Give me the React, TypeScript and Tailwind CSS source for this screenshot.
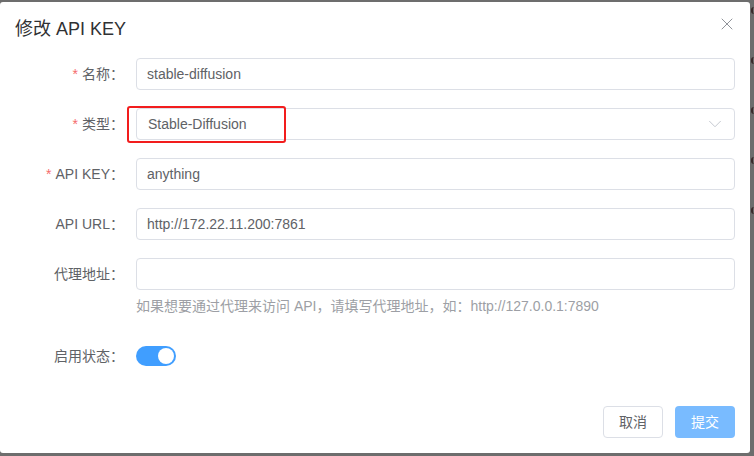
import { X, ChevronDown } from 'lucide-react';

const FONT = '"Liberation Sans", "Noto Sans CJK SC", sans-serif';

function Label({ text, required }: { text: string; required?: boolean }) {
  return (
    <div className="w-[136px] shrink-0 pr-[12px] text-right text-[14px] leading-[32px] text-[#606266]">
      {required && <span className="mr-[4px] text-[#f56c6c]">*</span>}
      {text}
    </div>
  );
}

function Field({ value }: { value: string }) {
  return (
    <div className="mr-[15px] flex h-[32px] flex-1 items-center rounded-[4px] border border-[#dcdfe6] px-[10px] text-[14px] text-[#606266]">
      {value}
    </div>
  );
}

export default function App() {
  return (
    <div className="relative h-[456px] w-[754px] overflow-hidden bg-[#6d6d6d]" style={{ fontFamily: FONT }}>
      {/* page content peeking out from behind the mask */}
      {[7, 57, 107, 157, 207].map((y) => (
        <span key={y} className="absolute left-[751px] h-[7px] w-[3px] rounded-l-full border-l-2 border-[#3a2a2a]" style={{ top: y }} />
      ))}

      <div className="mt-[2px] h-[451px] w-[750px] rounded-[3px] bg-white">
        <div className="relative px-[15px] pt-[15px]">
          <h1 className="text-[18px] leading-[24px] text-[#303133]">修改 API KEY</h1>
          <button className="absolute right-[13px] top-[12px] text-[#909399]">
            <X size={20} strokeWidth={1.2} />
          </button>
        </div>

        <div className="mt-[17px] flex flex-col">
          <div className="mb-[18px] flex">
            <Label text="名称：" required />
            <Field value="stable-diffusion" />
          </div>

          <div className="mb-[18px] flex">
            <Label text="类型：" required />
            <div className="relative mr-[15px] flex h-[32px] flex-1 items-center justify-between rounded-[4px] border border-[#dcdfe6] pl-[11px] pr-[8px] text-[14px] text-[#606266]">
              <span>Stable-Diffusion</span>
              <ChevronDown size={22} strokeWidth={1} className="text-[#c0c4cc]" />
              <div className="absolute left-[-10px] top-[-3px] h-[37px] w-[159px] rounded-[3px] border-2 border-[#f21d1d]" />
            </div>
          </div>

          <div className="mb-[18px] flex">
            <Label text="API KEY：" required />
            <Field value="anything" />
          </div>

          <div className="mb-[18px] flex">
            <Label text="API URL：" />
            <Field value="http://172.22.11.200:7861" />
          </div>

          <div className="flex">
            <Label text="代理地址：" />
            <Field value="" />
          </div>
          <p className="ml-[136px] mt-[6px] text-[14px] leading-[20px] text-[#9d9fa5]">
            如果想要通过代理来访问 API，请填写代理地址，如：http://127.0.0.1:7890
          </p>

          <div className="mt-[24px] flex items-center">
            <Label text="启用状态：" />
            <div className="flex h-[20px] w-[40px] items-center justify-end rounded-full bg-[#409eff] px-[2px]">
              <div className="h-[16px] w-[16px] rounded-full bg-white" />
            </div>
          </div>
        </div>

        <div className="mr-[15px] mt-[34px] flex justify-end gap-[12px]">
          <button className="h-[32px] w-[60px] rounded-[4px] border border-[#dcdfe6] bg-white text-[14px] text-[#606266]">
            取消
          </button>
          <button className="h-[32px] w-[60px] rounded-[4px] bg-[#79bbff] text-[14px] text-white">
            提交
          </button>
        </div>
      </div>
    </div>
  );
}
